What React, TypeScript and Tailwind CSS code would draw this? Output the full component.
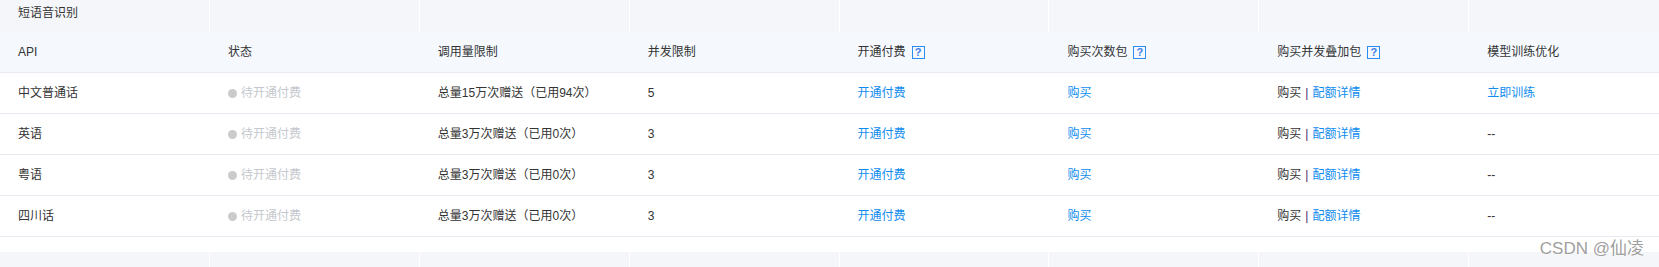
import React from "react"

type Row = {
	api: string
	limit: string
	qps: string
	train: string | null
}

const ROWS: Row[] = [
	{ api: "中文普通话", limit: "总量15万次赠送（已用94次）", qps: "5", train: "立即训练" },
	{ api: "英语", limit: "总量3万次赠送（已用0次）", qps: "3", train: null },
	{ api: "粤语", limit: "总量3万次赠送（已用0次）", qps: "3", train: null },
	{ api: "四川话", limit: "总量3万次赠送（已用0次）", qps: "3", train: null }
]

const cols = "grid grid-cols-[repeat(8,209.9px)]"
const cell = "flex items-center pl-[18px] whitespace-nowrap"

function Help(): React.ReactElement {
	return (
		<span className="ml-[6px] inline-flex h-[13px] w-[13px] items-center justify-center border border-[#2b8ef0] text-[11px] font-bold leading-none text-[#3d7fe6]">
			?
		</span>
	)
}

function GroupRow({ title }: { title?: string }): React.ReactElement {
	return (
		<div className={`${cols} h-[32px] bg-[#f5f6f9]`}>
			{Array.from({ length: 8 }).map((_, i) => (
				<div
					key={i}
					className={`flex items-start pl-[18px] pt-[5px] leading-[16px] ${i < 7 ? "border-r border-white" : ""}`}
				>
					{i === 0 && title}
				</div>
			))}
		</div>
	)
}

export default function App(): React.ReactElement {
	return (
		<div
			className="relative h-[267px] w-full overflow-hidden bg-white text-[12px] text-[#333]"
			style={{ fontFamily: '"Liberation Sans", Arial, "Noto Sans CJK SC", sans-serif' }}
		>
			<GroupRow title="短语音识别" />

			{/* 表头 */}
			<div className={`${cols} h-[41px] border-b border-[#e8ebf1] bg-[#f5f9fe]`}>
				<div className={cell}>API</div>
				<div className={cell}>状态</div>
				<div className={cell}>调用量限制</div>
				<div className={cell}>并发限制</div>
				<div className={cell}>开通付费<Help /></div>
				<div className={cell}>购买次数包<Help /></div>
				<div className={cell}>购买并发叠加包<Help /></div>
				<div className={cell}>模型训练优化</div>
			</div>

			{ROWS.map((row) => (
				<div key={row.api} className={`${cols} h-[41px] border-b border-[#e8ebf1]`}>
					<div className={cell}>{row.api}</div>
					<div className={`${cell} text-[#c5c8ce]`}>
						<span className="mr-[4px] h-[9px] w-[9px] rounded-full bg-[#cbcbcb]" />
						待开通付费
					</div>
					<div className={cell}>{row.limit}</div>
					<div className={cell}>{row.qps}</div>
					<div className={`${cell} text-[#108cee]`}>开通付费</div>
					<div className={`${cell} text-[#108cee]`}>购买</div>
					<div className={cell}>
						购买<span className="mx-[4px] text-[#4b2a6b]">|</span>
						<span className="text-[#108cee]">配额详情</span>
					</div>
					<div className={`${cell} ${row.train ? "text-[#108cee]" : ""}`}>{row.train ?? "--"}</div>
				</div>
			))}

			<div className="h-[15px]" />
			<GroupRow />

			{/* 水印 */}
			<div className="absolute right-[15px] top-[238px] text-[17px] leading-[21px] text-[#a0a0a0] [text-shadow:0_0_2px_#fff]">
				CSDN @仙凌
			</div>
		</div>
	)
}
